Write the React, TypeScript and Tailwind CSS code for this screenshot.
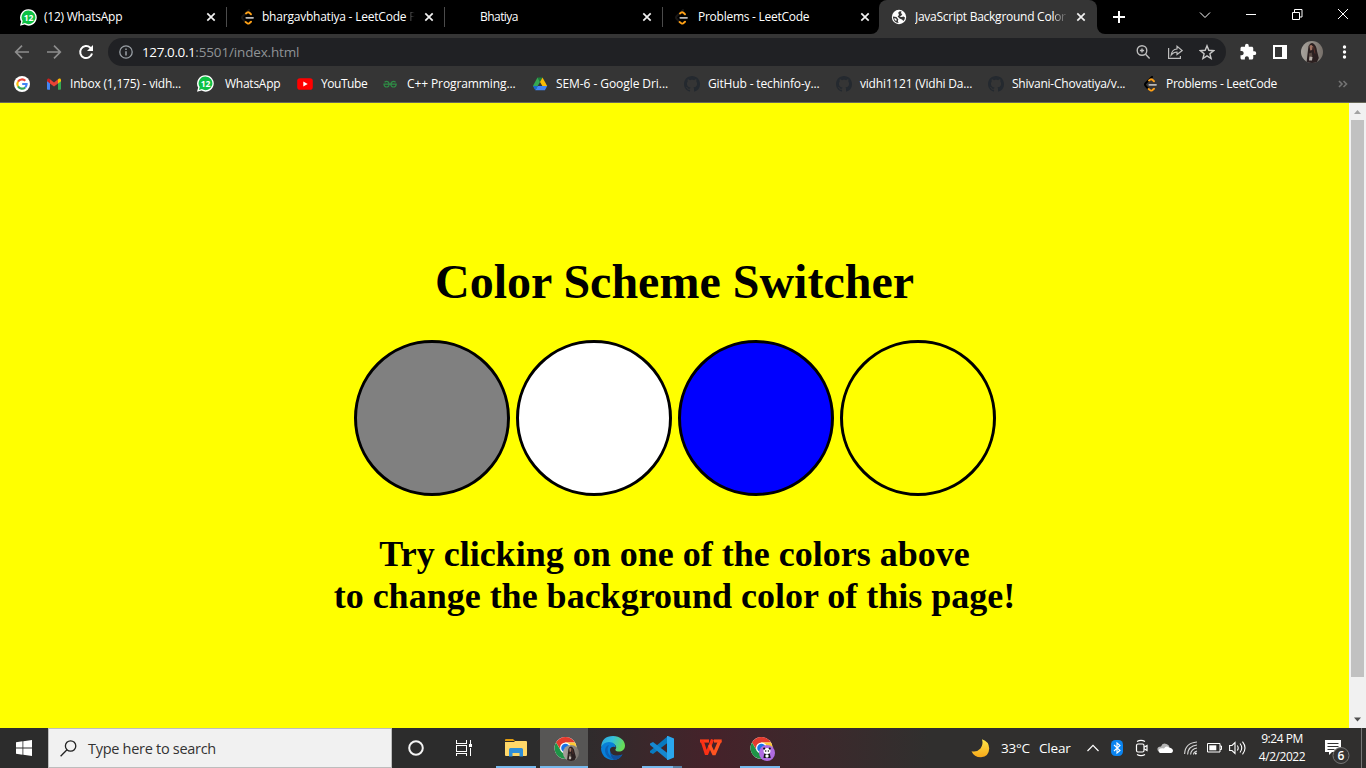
import React, { useState } from "react";
import type { ReactNode } from "react";

const WhatsAppIcon = () => (
  <svg width="17" height="17" viewBox="0 0 17 17">
    <path d="M8.6 0.2a8.2 8.2 0 1 1-4 15.4L0 16.8l1.2-4.3A8.2 8.2 0 0 1 8.6 0.2z" fill="#fff" />
    <path d="M8.6 1.6a6.8 6.8 0 1 1-3.7 12.5L1.9 14.9l.8-2.8A6.8 6.8 0 0 1 8.6 1.6z" fill="#0dc143" />
    <text x="8.5" y="11.6" textAnchor="middle" fontSize="8.5" fontWeight="700" fill="#fff" fontFamily="Open Sans, sans-serif">12</text>
  </svg>
);

const LeetIcon = ({ dark = false }: { dark?: boolean }) => (
  <svg width="16" height="16" viewBox="0 0 16 16" fill="none" strokeLinecap="round">
    <path d="M9 1 2.600 7.200q-1.200 1.300 0 2.700l2.400 2.700" stroke={dark ? "#000" : "#191716"} strokeWidth="2" />
    <path d="M6 4.500 7.300 3.500q.9-.6 1.900.1l1.800 1.700" stroke="#ffa116" strokeWidth="1.900" />
    <path d="M5.600 13 7.300 14.300q1 .7 2 0l1.700-1.600" stroke="#ffa116" strokeWidth="1.900" />
    <path d="M6.300 8.800H13" stroke="#b9b9b9" strokeWidth="1.800" />
  </svg>
);

const GlobeIcon = () => (
  <svg width="16" height="16" viewBox="0 0 16 16">
    <circle cx="8" cy="8" r="7.200" fill="#fff" />
    <path d="M7.200 3.800Q8.200 2 10.600 2.400L9.800 4.200 11.400 5 10.200 6.800 8.400 7.400 10.600 8 12.600 7.600 14 8.400Q13.800 10.400 12.400 12L11 10.400 8.600 9.600 6.600 7.600 8 6z" fill="#353535" />
    <path d="M1.800 7.400 5.400 8 7.400 10.400 6.800 12 7.600 14Q2.600 13.400 1.800 7.400z" fill="#353535" />
    <path d="M3 9.200 5 9.600 5.800 11 5 12Q3.400 11 3 9.200z" fill="#fff" />
  </svg>
);

const GoogleIcon = () => (
  <svg width="16" height="16" viewBox="0 0 16 16">
    <circle cx="8" cy="8" r="8" fill="#fff" />
    <g fill="none" strokeWidth="2.1">
      <path d="M11.3 4.8A4.7 4.7 0 0 0 4 5.6" stroke="#ea4335" />
      <path d="M4 5.6a4.7 4.7 0 0 0 0 4.8" stroke="#fbbc05" />
      <path d="M4 10.4a4.7 4.7 0 0 0 7.2 1" stroke="#34a853" />
      <path d="M11.2 11.4Q12.6 10 12.6 8H8.2" stroke="#4285f4" />
    </g>
  </svg>
);

const GmailIcon = () => (
  <svg width="16" height="16" viewBox="0 0 16 16">
    <path d="M1 4.2V13q0 .8.8.8H4V6.5z" fill="#4285f4" />
    <path d="M15 4.2V13q0 .8-.8.8H12V6.5z" fill="#34a853" />
    <path d="M12 3.3v4.2l3-2.3V3.9q-.1-1.8-1.9-1.4z" fill="#fbbc04" />
    <path d="M1 5.2V3.9q.2-1.9 2-1.4l1 .8v4.2z" fill="#c5221f" />
    <path d="M4 3.3 8 6.4l4-3.1v4.2l-4 3-4-3z" fill="#ea4335" />
  </svg>
);

const YouTubeIcon = () => (
  <svg width="16" height="16" viewBox="0 0 16 16">
    <rect x="0.2" y="2.3" width="15.6" height="11.4" rx="2.8" fill="#f00" />
    <path d="M6.3 5.4v5.2L10.7 8z" fill="#fff" />
  </svg>
);

const GfgIcon = () => (
  <svg className="-ml-0.5" width="16" height="16" viewBox="0 0 16 16" fill="none" stroke="#2f8d46" strokeWidth="1.200">
    <path d="M2.600 6.200Q4.600 4.500 6.500 6.200 8 8.400 6.600 10.200 4.500 11.800 2.700 10.200 2 9.300 2 8.200H14.200Q14.200 9.300 13.500 10.200 11.600 11.800 9.500 10.200 8 8.400 9.600 6.200 11.600 4.500 13.600 6.200" />
  </svg>
);

const DriveIcon = () => (
  <svg className="-ml-px" width="16" height="16" viewBox="0 0 16 16">
    <path d="M5.500 1.500h5L8 6z" fill="#188038" />
    <path d="M5.500 1.500 1 9.700l2.400 4.200L8 6z" fill="#34a853" />
    <path d="M10.500 1.500 8 6l2.400 4h4.800z" fill="#fbbc04" />
    <path d="M5.800 10h9.400l-2.300 4.200H3.300z" fill="#4285f4" />
    <path d="M1 10h4.800l-2.500 4.200z" fill="#1967d2" />
  </svg>
);

const GitHubIcon = () => (
  <svg width="16" height="16" viewBox="0 0 16 16" fill="#24292f">
    <path d="M8 0C3.580 0 0 3.580 0 8c0 3.540 2.290 6.530 5.470 7.590.4.070.55-.17.55-.38 0-.19-.01-.82-.01-1.490-2.010.37-2.530-.49-2.690-.94-.09-.23-.48-.94-.82-1.130-.28-.15-.68-.52-.01-.53.63-.01 1.080.58 1.230.82.72 1.210 1.870.87 2.330.66.07-.52.28-.87.51-1.070-1.780-.2-3.640-.89-3.640-3.950 0-.87.31-1.590.82-2.150-.08-.2-.36-1.020.08-2.120 0 0 .67-.21 2.200.82.64-.18 1.320-.27 2-.27s1.360.09 2 .27c1.530-1.040 2.200-.82 2.200-.82.44 1.100.16 1.920.08 2.120.51.56.82 1.270.82 2.150 0 3.070-1.870 3.750-3.650 3.950.29.25.54.73.54 1.480 0 1.070-.01 1.930-.01 2.200 0 .21.15.46.55.38A8.010 8.010 0 0 0 16 8c0-4.420-3.580-8-8-8z" />
  </svg>
);

const CloseIcon = () => (
  <svg width="16" height="16" viewBox="0 0 16 16" stroke="#f1f1f1" strokeWidth="1.700">
    <path d="M4.300 4.300l7.400 7.400M11.700 4.300l-7.400 7.400" />
  </svg>
);

const Portrait = ({ size }: { size: number }) => (
  <svg width={size} height={size} viewBox="0 0 22 22">
    <defs>
      <clipPath id={`face${size}`}><circle cx="11" cy="11" r="11" /></clipPath>
      <linearGradient id={`wall${size}`}><stop stopColor="#a8a49d" /><stop offset="1" stopColor="#77706a" /></linearGradient>
    </defs>
    <g clipPath={`url(#face${size})`}>
      <rect width="22" height="22" fill={`url(#wall${size})`} />
      <path d="M7.500 5Q10 .5 13 3q2.500 2 3 7l1.800 7-2.300 5H5.500L6.500 13z" fill="#2b2020" />
      <path d="M8.500 4.800Q10.500 3 11.600 5.200l-.5 3.800-1.900.6z" fill="#a0705f" />
      <path d="M7.800 12.500l3-1 .6 4-2.800 2.500z" fill="#574841" />
      <path d="M8.500 15.500l3 .5-.5 3.500H8z" fill="#b9b1aa" />
      <path d="M12.500 5.500l1.500 7" stroke="#5b332c" />
    </g>
  </svg>
);

const ChromeIcon = ({ children }: { children?: ReactNode }) => (
  <div className="relative h-6 w-6">
    <svg width="24" height="24" viewBox="0 0 24 24">
      <circle cx="11.500" cy="12" r="11" fill="#fff" />
      <path d="M2 6.500A11 11 0 0 1 21 6.500H11.500L7 14.500z" fill="#e33b2e" />
      <path d="M21 6.500A11 11 0 0 1 11.500 23L16.300 14.800 11.500 6.500z" fill="#fcc934" />
      <path d="M2 6.500 6.700 14.600 11.500 17.500h3.300L11.500 23A11 11 0 0 1 2 6.500z" fill="#1e9447" />
      <circle cx="11.500" cy="12" r="5.500" fill="#fff" />
      <circle cx="11.500" cy="12" r="4.300" fill="#1a73e8" />
    </svg>
    <div className="absolute left-[9px] top-[9px]">{children}</div>
  </div>
);

const PandaBadge = () => (
  <svg width="16" height="16" viewBox="0 0 16 16">
    <circle cx="8" cy="8" r="8" fill="#af6be0" />
    <path d="M5.200 8.500h5.600l.9 4.500H4.500z" fill="#111" />
    <ellipse cx="8" cy="6" rx="3.500" ry="2.900" fill="#fff" />
    <circle cx="5.200" cy="3.600" r="1.100" fill="#111" /><circle cx="10.800" cy="3.600" r="1.100" fill="#111" />
    <circle cx="6.700" cy="6" r=".8" fill="#111" /><circle cx="9.400" cy="6" r=".8" fill="#111" />
    <ellipse cx="8" cy="11" rx="1.700" ry="1.800" fill="#fff" />
  </svg>
);

const Tab = ({ icon, title, width, tracking, faded }: { icon?: ReactNode; title: string; width: string; tracking: string; faded?: string }) => (
  <div className={`flex h-[34px] shrink-0 items-center pl-[11px] ${width}`}>
    <div className="w-6 shrink-0">{icon}</div>
    <div className={`w-[154px] shrink-0 overflow-hidden whitespace-nowrap leading-4 ${tracking}`}>
      {title}{faded && <span className="bg-linear-to-r from-[#777] to-black bg-clip-text text-transparent">{faded}</span>}
    </div>
    <div className="ml-[5px] shrink-0"><CloseIcon /></div>
    <div className="ml-[7px] h-5 w-px bg-[#4b4b4b]" />
  </div>
);

const bookmarks = [
  { icon: <GoogleIcon />, title: "", cell: "w-8", gap: "pl-2", track: "" },
  { icon: <GmailIcon />, title: "Inbox (1,175) - vidh...", cell: "w-[151px]", gap: "pl-2", track: "tracking-[-0.2px]" },
  { icon: <WhatsAppIcon />, title: "WhatsApp", cell: "w-[100px]", gap: "pl-[11px]", track: "tracking-[-0.250px]" },
  { icon: <YouTubeIcon />, title: "YouTube", cell: "w-[87px]", gap: "pl-2", track: "tracking-[-0.450px]" },
  { icon: <GfgIcon />, title: "C++ Programming...", cell: "w-[149px]", gap: "pl-[9px]", track: "tracking-[-0.100px]" },
  { icon: <DriveIcon />, title: "SEM-6 - Google Dri...", cell: "w-[151px]", gap: "pl-2", track: "tracking-[-0.070px]" },
  { icon: <GitHubIcon />, title: "GitHub - techinfo-y...", cell: "w-[152px]", gap: "pl-2", track: "tracking-[-0.150px]" },
  { icon: <GitHubIcon />, title: "vidhi1121 (Vidhi Da...", cell: "w-[152px]", gap: "pl-2", track: "tracking-[-0.210px]" },
  { icon: <GitHubIcon />, title: "Shivani-Chovatiya/v...", cell: "w-[155px]", gap: "pl-2", track: "tracking-[-0.240px]" },
  { icon: <LeetIcon dark />, title: "Problems - LeetCode", cell: "w-[192px]", gap: "pl-[7px]", track: "tracking-[-0.280px]" },
];

const Browser = () => (
  <header className="h-[103px] shrink-0 bg-[#353535] text-xs text-white">
    <div className="flex h-[34px] bg-black pl-[9px]">
      <Tab icon={<WhatsAppIcon />} title="(12) WhatsApp" width="w-[218px]" tracking="tracking-[-0.230px]" />
      <Tab icon={<span className="block pl-0.5"><LeetIcon /></span>} title="bhargavbhatiya - LeetCode " faded="P" width="w-[218px]" tracking="tracking-[-0.220px]" />
      <Tab title="Bhatiya" width="w-[218px]" tracking="tracking-[-0.550px]" />
      <Tab icon={<LeetIcon />} title="Problems - LeetCode" width="w-[208px]" tracking="tracking-[-0.260px]" />
      <div className="flex w-[234px] shrink-0">
        <div className="w-2 bg-[#353535]"><div className="h-full w-2 rounded-br-lg bg-black" /></div>
        <div className="flex w-[218px] items-center rounded-t-lg bg-[#353535] pl-3">
          <GlobeIcon />
          <div className="ml-2 w-[152px] overflow-hidden whitespace-nowrap leading-4 tracking-[-0.260px]">
            JavaScript Background Col<span className="bg-linear-to-r from-[#ddd] to-[#555] bg-clip-text text-transparent">or</span>
          </div>
          <div className="ml-[6px]"><CloseIcon /></div>
        </div>
        <div className="w-2 bg-[#353535]"><div className="h-full w-2 rounded-bl-lg bg-black" /></div>
      </div>
      <svg className="mt-[9px] ml-1.5 shrink-0" width="16" height="16" viewBox="0 0 16 16" stroke="#fff" strokeWidth="2"><path d="M2 8h12M8 2v12" /></svg>
      <div className="ml-auto flex shrink-0 items-center pb-[6px]">
        {["M2 5.500l5 5 5-5", "M2 7.500h10", "M2.500 5.500h7v7h-7zM4.500 5.500v-3h7.500v7.500H9.500", "M2 2l10 10M12 2L2 12"].map((d) => (
          <div key={d} className="flex w-[46px] justify-center"><svg width="14" height="14" viewBox="0 0 14 14" fill="none" stroke="#fff"><path d={d} /></svg></div>
        ))}
      </div>
    </div>
    <div className="flex h-9 items-center pl-[14px]">
      <svg width="16" height="16" viewBox="0 0 16 16" fill="none" stroke="#8d8d8d" strokeWidth="1.700"><path d="M15 8H2M8 1.700 1.700 8 8 14.300" /></svg>
      <svg className="ml-4" width="16" height="16" viewBox="0 0 16 16" fill="none" stroke="#8d8d8d" strokeWidth="1.700"><path d="M1 8h13M8 1.700 14.300 8 8 14.300" /></svg>
      <svg className="ml-4" width="16" height="16" viewBox="0 0 16 16" fill="none" stroke="#fff" strokeWidth="2"><path d="M14 9.500A6 6 0 1 1 12.300 3.700L14 5.500" /><path d="M15 1v6H9z" fill="#fff" stroke="none" /></svg>
      <div className="ml-[14px] flex h-7 w-[1118px] items-center rounded-full bg-[#202124] pl-[11px] pr-[11px]">
        <svg width="14" height="14" viewBox="0 0 14 14" fill="none" stroke="#9aa0a6" strokeWidth="1.300"><circle cx="7" cy="7" r="6.200" /><path d="M7 6.200v4.200M7 3.500V5" strokeWidth="1.500" /></svg>
        <div className="ml-[9px] flex-1 text-[13.500px] tracking-[-0.160px] text-[#8f9396]"><span className="tracking-[-0.400px] text-white">127.0.0.1</span>:5501/index.html</div>
        <svg width="16" height="16" viewBox="0 0 16 16" fill="none" stroke="#bdbdbd" strokeWidth="1.400"><circle cx="7" cy="6.500" r="4.800" /><path d="M10.600 10.200l4 4.200M7 4.400v4.200M4.900 6.500h4.200" /></svg>
        <svg className="ml-4" width="16" height="16" viewBox="0 0 16 16" fill="none" stroke="#bdbdbd" strokeWidth="1.200"><path d="M1.600 4v10.400h11.800V12" /><path d="M10 2.200 15.200 6.500l-5.200 4V8Q6.500 8 4.200 11 4.800 5.500 10 5z" /></svg>
        <svg className="ml-4" width="16" height="16" viewBox="0 0 16 16" fill="none" stroke="#c9c9c9" strokeWidth="1.400"><path d="M8 1.800l1.800 4.500 4.800.4-3.700 3.100 1.200 4.700L8 11.900l-4.100 2.600 1.200-4.700L1.400 6.700l4.800-.4z" /></svg>
      </div>
      <svg className="ml-[13px]" width="18" height="18" viewBox="0 0 24 24" fill="#fff"><path d="M20.500 11H19V7c0-1.100-.9-2-2-2h-4V3.500a2.500 2.500 0 0 0-5 0V5H4c-1.100 0-1.990.9-1.990 2v3.800H3.500c1.490 0 2.700 1.210 2.700 2.700s-1.210 2.700-2.700 2.700H2V20c0 1.100.9 2 2 2h3.800v-1.500c0-1.490 1.210-2.700 2.700-2.700s2.700 1.210 2.700 2.700V22H17c1.100 0 2-.9 2-2v-4h1.500a2.500 2.500 0 0 0 0-5z" /></svg>
      <svg className="ml-4" width="14" height="14" viewBox="0 0 14 14"><path d="M1 1h12v12H1z" fill="none" stroke="#fff" strokeWidth="2" /><path d="M9 1h4v12H9z" fill="#fff" /></svg>
      <div className="ml-[14px]"><Portrait size={22} /></div>
      <svg className="ml-[17px]" width="8" height="14" viewBox="0 0 8 14" fill="#fff"><circle cx="4.500" cy="2" r="1.700" /><circle cx="4.500" cy="7" r="1.700" /><circle cx="4.500" cy="12" r="1.700" /></svg>
    </div>
    <div className="flex h-[33px] items-center border-b border-[#68685a] pb-[5px] pl-[14px]">
      {bookmarks.map((b, i) => (
        <div key={i} className={`flex shrink-0 items-center ${b.cell}`}>
          <div className="shrink-0">{b.icon}</div>
          <div className={`whitespace-nowrap leading-4 ${b.gap} ${b.track}`}>{b.title}</div>
        </div>
      ))}
      <svg className="ml-[3px]" width="10" height="8" viewBox="0 0 10 8" fill="none" stroke="#737373" strokeWidth="1.600"><path d="M1 1l3 3-3 3M5.500 1l3 3-3 3" /></svg>
    </div>
  </header>
);

const swatches = [
  { name: "grey", fill: "bg-[#808080]" },
  { name: "white", fill: "bg-white" },
  { name: "blue", fill: "bg-[#0000ff]" },
  { name: "yellow", fill: "bg-[#ffff00]" },
];

const Page = () => {
  const [fill, setFill] = useState("bg-[#ffff00]");
  return (
    <div className="flex h-[625px] shrink-0">
      <main className={`flex flex-1 flex-col items-center pt-[151px] text-center font-['Liberation_Serif',serif] font-bold text-black ${fill}`}>
        <h1 className="text-[48px] leading-[55px]">Color Scheme Switcher</h1>
        <div className="mt-[31px] flex gap-1.5">
          {swatches.map((s) => (
            <button key={s.name} aria-label={s.name} onClick={() => setFill(s.fill)} className={`h-[156px] w-[156px] rounded-full border-3 border-black ${s.fill}`} />
          ))}
        </div>
        <h2 className="mt-[37px] text-[36px] leading-[42px]">Try clicking on one of the colors above<br />to change the background color of this page!</h2>
      </main>
      <div className="flex w-[17px] flex-col items-center bg-[#f1f1f1]">
        <svg width="17" height="17" viewBox="0 0 17 17"><path d="M5 11h7L8.500 7z" fill="#a3a3a3" /></svg>
        <div className="h-[557px] w-[13px] bg-[#c1c1c1]" />
        <svg className="mt-auto" width="17" height="17" viewBox="0 0 17 17"><path d="M5 6.500h7L8.500 10.500z" fill="#505050" /></svg>
      </div>
    </div>
  );
};

const TaskButton = ({ children, bar = "" }: { children: ReactNode; bar?: string }) => (
  <div className="flex h-10 w-[49px] shrink-0 flex-col items-center">
    <div className="flex h-[38px] items-center pt-px">{children}</div>
    <div className={`h-0.5 ${bar}`} />
  </div>
);

const Taskbar = () => (
  <footer className="flex h-10 shrink-0 items-center bg-linear-to-r from-[#2c2c2c] from-[42%] via-[#45222a] via-[52%] to-[#302f2e] to-[68%] font-['Open_Sans',sans-serif] text-white">
    <div className="flex w-12 justify-center">
      <svg width="16" height="16" viewBox="0 0 16 16" fill="#fff"><path d="M0 2.200 6.500 1.300v6.300H0zM7.300 1.200 16 0v7.600H7.300zM0 8.400h6.500v6.300L0 13.800zM7.300 8.400H16V16l-8.700-1.200z" /></svg>
    </div>
    <div className="flex h-10 w-[344px] items-center border border-[#bdbdbd] bg-[#f1f1f1] pl-[11px]">
      <svg width="17" height="17" viewBox="0 0 17 17" fill="none" stroke="#222" strokeWidth="1.300"><circle cx="10.600" cy="6" r="5.200" /><path d="M7 9.800.6 16.200" /></svg>
      <span className="ml-[11px] pt-px text-[14.500px] tracking-[-0.290px] text-[#333]">Type here to search</span>
    </div>
    <div className="flex w-12 justify-center"><svg width="16" height="16" viewBox="0 0 16 16"><circle cx="8" cy="8" r="6.800" fill="none" stroke="#f4f4f4" strokeWidth="2" /></svg></div>
    <div className="flex w-[51px] justify-center pr-[3px]">
      <svg width="18" height="16" viewBox="0 0 18 16" fill="none" stroke="#fff" shapeRendering="crispEdges"><path d="M1.500 0v3.500h10V0M1.500 5.500h10v6h-10zM1.500 16v-2.500h10V16M15.500 0v4M15.500 8v8" /><path d="M14 4h3v3h-3z" fill="#fff" stroke="none" /></svg>
    </div>
    <TaskButton bar="w-10 bg-[#76b9ed]">
      <svg width="22" height="20" viewBox="0 0 22 20"><path d="M0 2q0-1 1-1h7l2 2H0z" fill="#e09b0d" /><path d="M0 4h9l1-1h11q1 0 1 1v13q0 1-1 1H1q-1 0-1-1z" fill="#ffd869" /><path d="M4 18.500v-7q0-1.500 1.500-1.500h11q1.500 0 1.500 1.500v7h-3.500V15h-7v3.500z" fill="#2f8fd8" /></svg>
    </TaskButton>
    <div className="flex h-10 w-12 flex-col items-center bg-[#575655]">
      <div className="flex h-[38px] items-center pt-0.5 pl-1"><ChromeIcon><Portrait size={16} /></ChromeIcon></div>
      <div className="h-0.5 w-12 bg-[#76b9ed]" />
    </div>
    <TaskButton>
      <svg width="24" height="24" viewBox="0 0 24 24">
        <defs><linearGradient id="sea" x1="0" y1="0" x2="1" y2=".3"><stop stopColor="#2aa5dc" /><stop offset=".5" stopColor="#35bfdc" /><stop offset="1" stopColor="#66dc59" /></linearGradient></defs>
        <path d="M0 11Q1 0 12 0c7 0 12 4.500 12 9.500 0 4-3 6-6 6-3.500 0-4.300-1.500-3-3 1-2-1-5-5-5Q4 7 0 11z" fill="url(#sea)" />
        <path d="M0 12Q2 6 8 6c4.500 0 7 3 6.500 5.500-1-1.500-5.500-1-5.500 2.500 0 5 6 7.500 12.500 4.500Q18 24 12 24C5 24 0 19 0 12z" fill="#087fd8" />
        <path d="M8 9Q5 14 8.500 19q2 3 5 4.900Q4.500 22 4 15 4 10 8 9z" fill="#0b62b5" />
        <path d="M9.200 14.500Q9.500 20 16 19.800q3.500-.2 5.500-1.300Q18.500 23.500 13 24 8.500 20 9.200 14.500z" fill="#124e9b" />
      </svg>
    </TaskButton>
    <TaskButton bar="w-10 bg-linear-to-r from-[#76b9ed] from-[78%] to-[#567fa3] to-[78%]">
      <svg width="24" height="24" viewBox="0 0 24 24"><path d="M18 0v6.500L3 18 0 16.500V15z" fill="#087abf" /><path d="M0 9V7.500L3 6l15 11.500V24z" fill="#1688d0" /><path d="M17 0h1l6 2.500v19L18 24h-1z" fill="#2aa7ee" /></svg>
    </TaskButton>
    <TaskButton>
      <svg width="22" height="18" viewBox="0 0 22 18" fill="none" strokeWidth="3.200" strokeLinejoin="bevel"><path d="M0 2h9" stroke="#ff3c18" /><path d="M2 1.500 6.500 15.500 12.500 .5" stroke="#fb3015" /><path d="M9.500 6l4.500 9.500L20 1.500" stroke="#ff5420" /><path d="M14 2h7.700" stroke="#ff4a1d" /></svg>
    </TaskButton>
    <TaskButton bar="w-10 bg-[#76b9ed]"><div className="pt-px pl-1"><ChromeIcon><PandaBadge /></ChromeIcon></div></TaskButton>
    <div className="ml-auto flex h-10 shrink-0 items-center">
      <svg width="19" height="19" viewBox="0 0 19 19"><defs><linearGradient id="moon" x1="0" y1="0" x2="0" y2="1"><stop stopColor="#ffe84a" /><stop offset="1" stopColor="#f7a819" /></linearGradient></defs><path d="M11 .3Q18 2.500 18.200 9.500 18 17.500 10 18.300 3 18.200 .5 12.200 6 13.500 9.500 9.500 12.500 5.500 11 .3z" fill="url(#moon)" /></svg>
      <span className="ml-[11px] w-[38px] pt-px text-[13.500px] tracking-[-0.200px]">33°C</span>
      <span className="w-[48px] pt-px text-[13.500px] tracking-[-0.200px]">Clear</span>
      <svg width="12" height="8" viewBox="0 0 12 8" fill="none" stroke="#fff" strokeWidth="1.200"><path d="M.5 7 6 1.300 11.500 7" /></svg>
      <svg className="ml-3" width="12" height="16" viewBox="0 0 12 16"><rect width="12" height="16" rx="4.500" fill="#0a84f0" /><path d="M3 5l6 5.500L6 13V3l3 2.500L3 11" fill="none" stroke="#fff" strokeWidth="1.100" /></svg>
      <svg className="ml-3" width="14" height="18" viewBox="0 0 14 18" fill="none" stroke="#fff" strokeWidth="1.200"><rect x="1.500" y="5" width="7.500" height="8" rx="1.500" /><path d="M9 8.300 12 6.500v5L9 9.700M2 2.500Q6 .3 10 2.500M2 15.500Q6 17.700 10 15.500" /></svg>
      <svg className="ml-2" width="16" height="12" viewBox="0 0 16 12"><path d="M1 9Q-1 5 4 4.500 5.500 0 9.500 2q3 1 3 4z" fill="#b5b5b5" /><path d="M3 11q-3-2 0-4.500Q6 6 7 6.500 9 3 12 5.500q4 .5 4 3.500-.5 2-2 2z" fill="#fff" /></svg>
      <svg className="ml-[11px]" width="14" height="14" viewBox="0 0 14 14" fill="none" stroke="#d8d8d8" strokeWidth="1.100"><path d="M.6 13Q1 2 13 1M3.600 13.500Q4 5 13 4M6.600 13.500Q7 8 13 7M9.500 13.500Q9.500 11 13 10" /><circle cx="11.800" cy="12.500" r="1" fill="#fff" stroke="none" /></svg>
      <svg className="ml-[9px]" width="16" height="10" viewBox="0 0 16 10"><path d="M.500 .500h12.500v8.500H.500zM13 3h1.500v3.500H13" fill="none" stroke="#fff" /><path d="M2.300 2.300h7v5h-7z" fill="#fff" /></svg>
      <svg className="ml-[6px]" width="18" height="14" viewBox="0 0 18 14" fill="none" stroke="#fff" strokeWidth="1.100"><path d="M.600 4.500H3L6 1.500v11L3 9.500H.600zM8.300 4.500q1.800 2.500 0 5M11 2.500q3.500 4.500 0 9M13.500.600q5 6.400 0 12.800" /></svg>
      <div className="flex w-[70px] flex-col items-center text-xs leading-[18px] tracking-[-0.450px]"><span>9:24 PM</span><span>4/2/2022</span></div>
      <div className="relative ml-2 h-[30px] w-[26px]">
        <svg width="26" height="31" viewBox="0 0 26 31"><path d="M0 7h16v12H7l-3 3v-3H0z" fill="#fff" /><path d="M2.500 10.500h11M2.500 13.500h11M2.500 16.500h7" stroke="#333" /><circle cx="16" cy="22.500" r="8" fill="#353434" stroke="#777" /></svg>
        <span className="absolute left-[12.500px] top-[14.500px] text-[12px] leading-4 font-semibold">6</span>
      </div>
      <div className="ml-[10px] mr-1 h-10 w-px bg-[#777]" />
    </div>
  </footer>
);

export default function App() {
  return (
    <div className="flex h-[768px] w-[1366px] flex-col overflow-hidden bg-black font-['Open_Sans',sans-serif]">
      <Browser />
      <Page />
      <Taskbar />
    </div>
  );
}
